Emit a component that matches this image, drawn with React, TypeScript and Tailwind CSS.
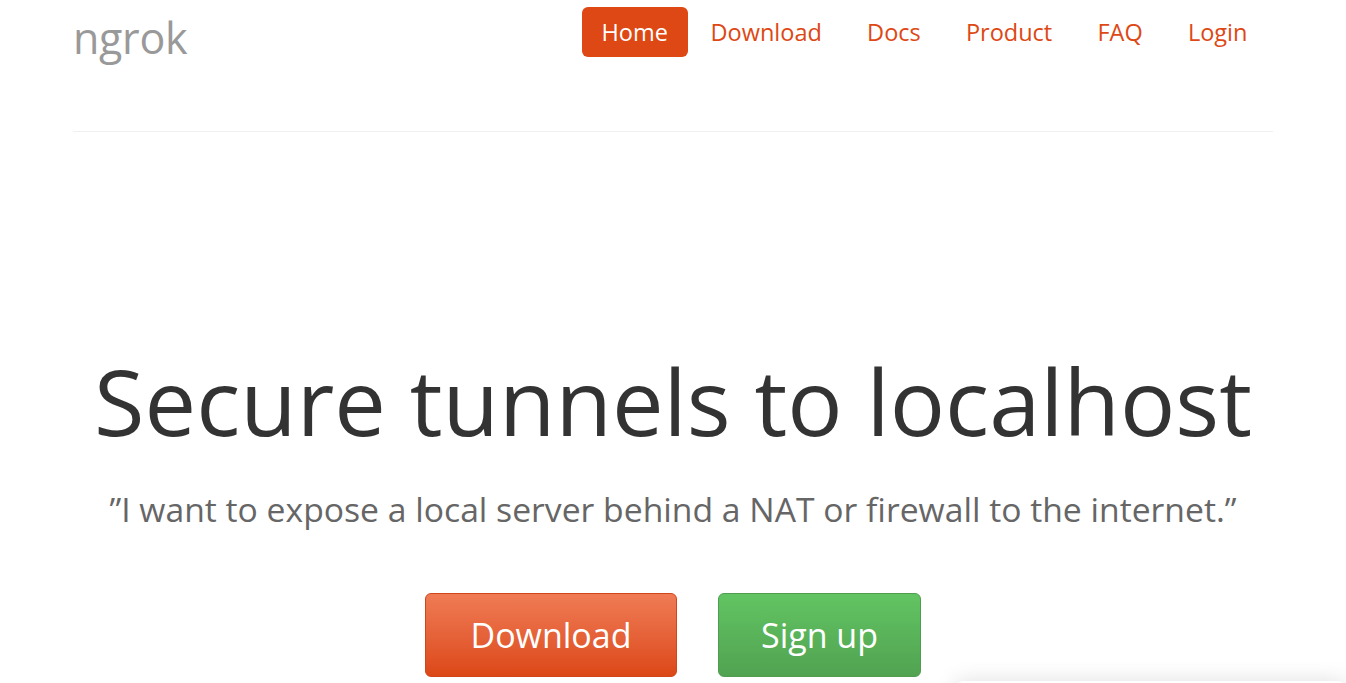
const links = ['Download', 'Docs', 'Product', 'FAQ', 'Login']

export default function App() {
  return (
    <div className="relative h-[683px] overflow-hidden bg-white font-['Open_Sans',sans-serif]">
      <div className="mx-auto w-[1200px]">
        {/* header */}
        <div className="flex items-start justify-between pt-[7px]">
          <a className="pt-[8px] text-[43px] leading-[46px] tracking-[-0.3px] text-[#999]">ngrok</a>
          <nav className="flex items-center pr-[3px]">
            <a className="rounded-md bg-[#dd4814] px-[20px] text-[23.5px] leading-[50px] text-white">Home</a>
            {links.map((l) => (
              <a key={l} className="px-[22.6px] text-[23.5px] leading-[50px] text-[#dd4814]">
                {l}
              </a>
            ))}
          </nav>
        </div>
        <hr className="mt-[70px] border-t border-[#f0f0f0]" />

        {/* hero */}
        <div className="pt-[219px] text-center">
          <h1 className="text-[92px] leading-[100px] text-[#333]">Secure tunnels to localhost</h1>
          <p className="mt-[36px] text-[33.7px] leading-[44px] text-[#666]">
            ”I want to expose a local server behind a NAT or firewall to the internet.”
          </p>
          <div className="mt-[62px] flex justify-center gap-[41px]">
            <a className="flex h-[84px] w-[252px] items-center justify-center rounded-md border border-[#d0451a] bg-gradient-to-b from-[#ef7b54] to-[#dc4715] text-[34px] text-white">
              Download
            </a>
            <a className="flex h-[84px] w-[203px] items-center justify-center rounded-md border border-[#4f9e4f] bg-gradient-to-b from-[#62c462] to-[#51a351] text-[34px] text-white">
              Sign up
            </a>
          </div>
        </div>
      </div>

      {/* floating panel below the fold */}
      <div className="absolute left-[955px] top-[681px] h-[60px] w-[391px] rounded-lg bg-white shadow-[0_0_22px_rgba(0,0,0,0.13)]" />
    </div>
  )
}
